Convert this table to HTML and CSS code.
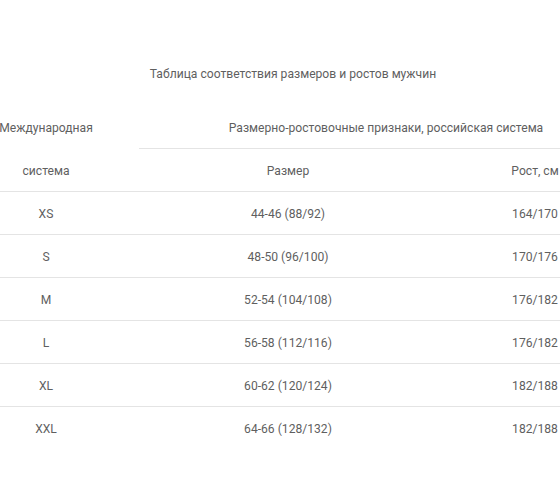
FILE: index.html
```html
<!DOCTYPE html>
<html lang="ru">
<head>
<meta charset="utf-8">
<link rel="stylesheet" href="styles.css">
</head>
<body>
<div class="wrap">
  <p class="title">Таблица соответствия размеров и ростов мужчин</p>
  <table class="sizes">
    <colgroup>
      <col class="c1"><col class="c2"><col class="c3">
    </colgroup>
    <thead>
      <tr class="h1">
        <th>Международная</th>
        <th colspan="2" class="group">Размерно-ростовочные признаки, российская система</th>
      </tr>
      <tr class="h2">
        <th class="nob">система</th>
        <th>Размер</th>
        <th>Рост, см</th>
      </tr>
    </thead>
    <tbody>
      <tr><td>XS</td><td>44-46 (88/92)</td><td>164/170</td></tr>
      <tr><td>S</td><td>48-50 (96/100)</td><td>170/176</td></tr>
      <tr><td>M</td><td>52-54 (104/108)</td><td>176/182</td></tr>
      <tr><td>L</td><td>56-58 (112/116)</td><td>176/182</td></tr>
      <tr><td>XL</td><td>60-62 (120/124)</td><td>182/188</td></tr>
      <tr><td>XXL</td><td>64-66 (128/132)</td><td>182/188</td></tr>
    </tbody>
  </table>
</div>
</body>
</html>
```

FILE: styles.css
```css
html, body {
  margin: 0;
  padding: 0;
  background: #fff;
  overflow: hidden;
}
body {
  font-family: Roboto, "Noto Sans", Arial, sans-serif;
  font-size: 12.12px;
  color: #5f5f5f;
  width: 560px;
  height: 504px;
}
.wrap {
  width: 680px;
  margin-left: -47px;
  padding-top: 64px;
}
.title {
  margin: 0 0 22px;
  line-height: 20px;
  text-align: center;
}
.sizes {
  width: 680px;
  border-collapse: collapse;
  table-layout: fixed;
}
.c1 { width: 186px; }
.c2 { width: 298px; }
.c3 { width: 196px; }
.sizes th, .sizes td {
  font-weight: normal;
  text-align: center;
  vertical-align: middle;
  padding: 2px 0 0;
  height: 40px;
  line-height: 16px;
}
.sizes th.group {
  border-bottom: 1px solid #e4e4e4;
}
.sizes tbody td {
  border-top: 1px solid #e4e4e4;
}
```
